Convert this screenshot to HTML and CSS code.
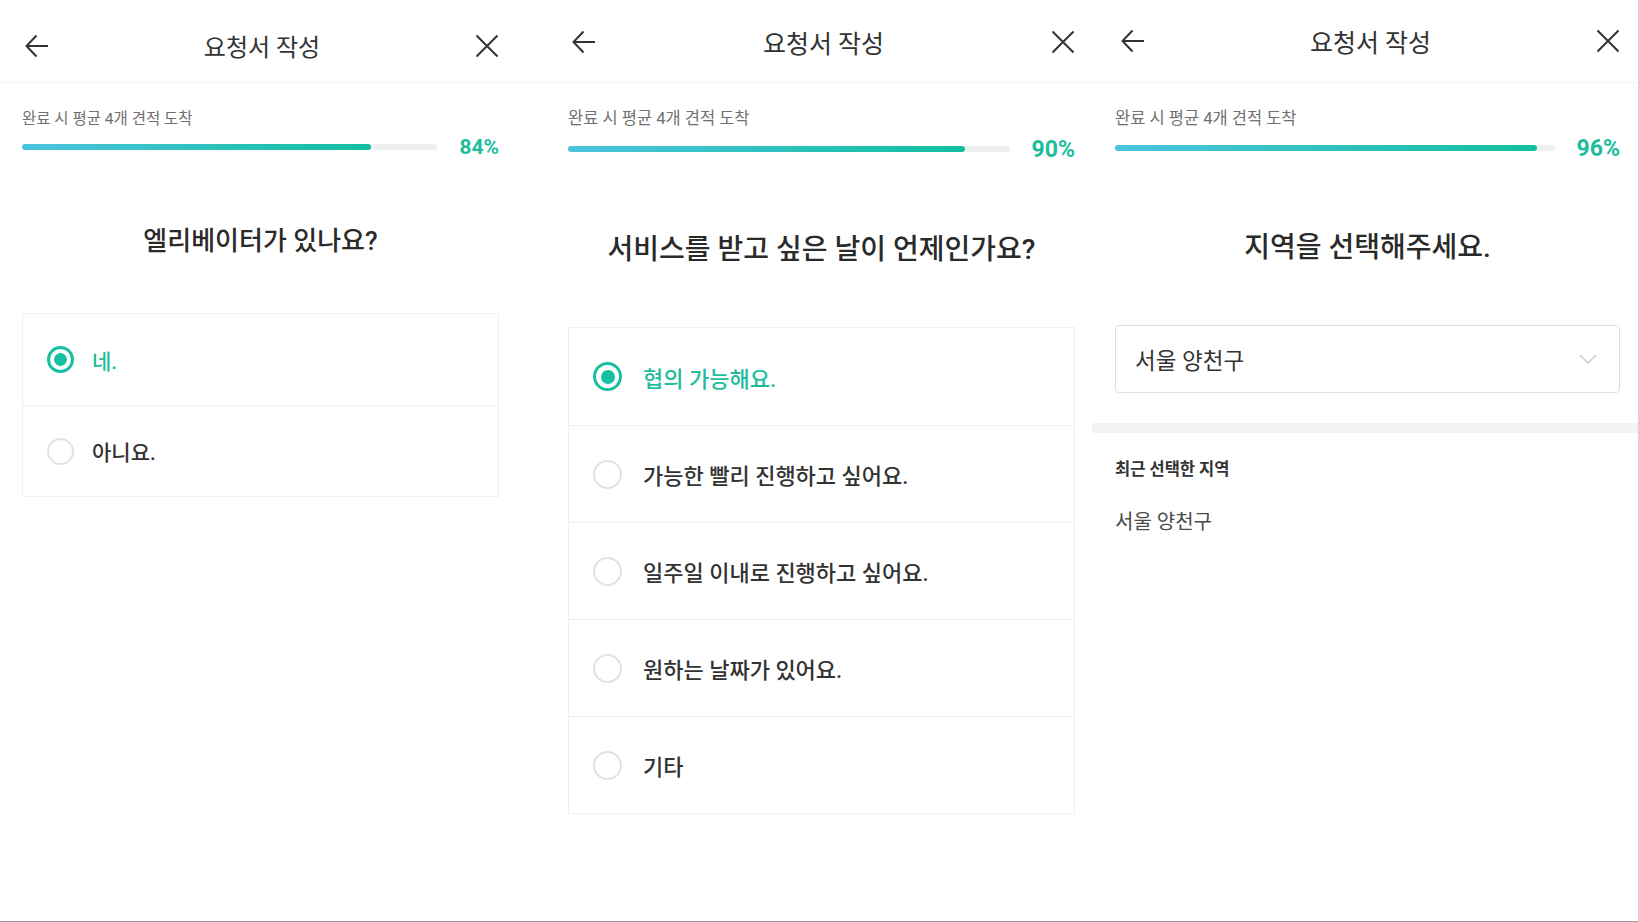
FILE: index.html
```html
<!DOCTYPE html>
<html lang="ko">

<head>
    <meta charset="UTF-8">
    <meta name="viewport" content="width=device-width, initial-scale=1.0">
    <title>요청서 작성</title>
    <link rel="stylesheet" href="styles.css">
</head>

<body>
    <div class="screens">

        <!-- step: elevator -->
        <div class="panel panel-1">
            <div class="header">
                <svg class="icon" viewBox="0 0 24 24"><path d="M23 12H2M11.5 1.5 1.5 12l10 10.5"/></svg>
                <span class="title">요청서 작성</span>
                <svg class="icon" viewBox="0 0 24 24"><path d="M1.5 1.5l21 21M22.5 1.5l-21 21"/></svg>
            </div>
            <div class="body">
                <p class="hint">완료 시 평균 4개 견적 도착</p>
                <div class="progress">
                    <div class="track"><div class="fill" style="width: 84%"></div></div>
                    <span class="percent">84%</span>
                </div>
                <h1 class="question">엘리베이터가 있나요?</h1>
                <div class="options">
                    <div class="option selected"><span class="radio"></span><span>네.</span></div>
                    <div class="option"><span class="radio"></span><span>아니요.</span></div>
                </div>
            </div>
        </div>

        <!-- step: date -->
        <div class="panel panel-2">
            <div class="header">
                <svg class="icon" viewBox="0 0 24 24"><path d="M23 12H2M11.5 1.5 1.5 12l10 10.5"/></svg>
                <span class="title">요청서 작성</span>
                <svg class="icon" viewBox="0 0 24 24"><path d="M1.5 1.5l21 21M22.5 1.5l-21 21"/></svg>
            </div>
            <div class="body">
                <p class="hint">완료 시 평균 4개 견적 도착</p>
                <div class="progress">
                    <div class="track"><div class="fill" style="width: 90%"></div></div>
                    <span class="percent">90%</span>
                </div>
                <h1 class="question">서비스를 받고 싶은 날이 언제인가요?</h1>
                <div class="options">
                    <div class="option selected"><span class="radio"></span><span>협의 가능해요.</span></div>
                    <div class="option"><span class="radio"></span><span>가능한 빨리 진행하고 싶어요.</span></div>
                    <div class="option"><span class="radio"></span><span>일주일 이내로 진행하고 싶어요.</span></div>
                    <div class="option"><span class="radio"></span><span>원하는 날짜가 있어요.</span></div>
                    <div class="option"><span class="radio"></span><span>기타</span></div>
                </div>
            </div>
        </div>

        <!-- step: region -->
        <div class="panel panel-3">
            <div class="header">
                <svg class="icon" viewBox="0 0 24 24"><path d="M23 12H2M11.5 1.5 1.5 12l10 10.5"/></svg>
                <span class="title">요청서 작성</span>
                <svg class="icon" viewBox="0 0 24 24"><path d="M1.5 1.5l21 21M22.5 1.5l-21 21"/></svg>
            </div>
            <div class="body">
                <p class="hint">완료 시 평균 4개 견적 도착</p>
                <div class="progress">
                    <div class="track"><div class="fill" style="width: 96%"></div></div>
                    <span class="percent">96%</span>
                </div>
                <h1 class="question">지역을 선택해주세요.</h1>
                <div class="select">
                    <span>서울 양천구</span>
                    <svg class="chevron" viewBox="0 0 18 10"><path d="M1 1l8 8 8-8"/></svg>
                </div>
                <div class="band"></div>
                <h2 class="recent-label">최근 선택한 지역</h2>
                <p class="recent">서울 양천구</p>
            </div>
        </div>

    </div>
</body>

</html>
```

FILE: styles.css
```css
* {
    box-sizing: border-box;
    font-family: Roboto, "Noto Sans CJK KR", sans-serif;
}

body {
    margin: 0;
    background-color: #ffffff;
    color: #333333;
}

.screens {
    display: flex;
    height: 922px;
    border-bottom: 1px solid #9a9a9a;
}

.panel {
    width: 546px;
    flex: none;
}

/* header */

.header {
    height: 83px;
    display: flex;
    align-items: center;
    justify-content: space-between;
    border-bottom: 1px solid #f4f4f4;
}

.icon {
    width: 24px;
    height: 24px;
    fill: none;
    stroke: #333333;
    stroke-width: 2;
}

.title {
    font-size: 25px;
    color: #333333;
}

/* progress */

.hint {
    margin: 26px 0 0;
    font-size: 16.5px;
    line-height: 20px;
    color: #707070;
}

.progress {
    display: flex;
    align-items: center;
    gap: 22px;
    height: 24px;
}

.track {
    flex: 1;
    height: 6px;
    border-radius: 3px;
    background-color: #f0f0f0;
}

.fill {
    height: 100%;
    border-radius: 3px;
    background: linear-gradient(to right, #4cc4df, #12bf9f);
}

.percent {
    font-size: 23px;
    font-weight: 700;
    color: #1dbd9e;
}

.question {
    margin: 69px 0 0;
    font-size: 28px;
    line-height: 38px;
    font-weight: 500;
    text-align: center;
    color: #2a2a2a;
}

/* options */

.options {
    border: 1px solid #efefef;
}

.option {
    display: flex;
    align-items: center;
    gap: 21px;
    height: 97px;
    padding-left: 24px;
    font-size: 22px;
    font-weight: 500;
    color: #333333;
}

.option + .option {
    border-top: 1px solid #efefef;
}

.radio {
    width: 29px;
    height: 29px;
    border: 2px solid #e2e2e2;
    border-radius: 50%;
    display: flex;
    align-items: center;
    justify-content: center;
}

.option.selected {
    color: #1dbd9e;
}

.option.selected .radio {
    border: 3px solid #16bf9f;
}

.option.selected .radio::after {
    content: "";
    width: 14px;
    height: 14px;
    border-radius: 50%;
    background-color: #16bf9f;
}

/* panel 1 is a slightly smaller screenshot */

.panel-1 .header {
    padding: 9px 47px 0 25px;
}

.panel-1 .title {
    font-size: 24px;
}

.panel-1 .body {
    padding: 0 47px 0 22px;
}

.panel-1 .hint {
    font-size: 15.5px;
}

.panel-1 .progress {
    margin-top: 6px;
}

.panel-1 .percent {
    font-size: 21px;
}

.panel-1 .question {
    margin-top: 64px;
    font-size: 26px;
    line-height: 36px;
}

.panel-1 .options {
    margin-top: 54px;
}

.panel-1 .option {
    height: 91px;
    gap: 18px;
    padding-left: 24px;
    font-size: 21px;
}

.panel-1 .radio {
    width: 27px;
    height: 27px;
}

.panel-1 .option.selected .radio::after {
    width: 13px;
    height: 13px;
}

.panel-2 .header {
    padding: 1px 17px 0 26px;
}

.panel-2 .body {
    padding: 0 17px 0 22px;
}

.panel-2 .progress {
    margin-top: 8px;
}

.panel-2 .question {
    margin-top: 70px;
}

.panel-2 .options {
    margin-top: 58px;
}

.panel-3 .header {
    padding: 0 18px 0 29px;
}

.panel-3 .body {
    padding: 0 18px 0 23px;
}

.panel-3 .progress {
    margin-top: 7px;
}

/* region select */

.select {
    margin-top: 58px;
    height: 68px;
    display: flex;
    align-items: center;
    justify-content: space-between;
    padding: 0 22px 0 19px;
    border: 1px solid #dddddd;
    border-radius: 4px;
    font-size: 22.5px;
    color: #333333;
}

.chevron {
    width: 18px;
    height: 10px;
    fill: none;
    stroke: #cccccc;
    stroke-width: 1.5;
}

.band {
    height: 10px;
    margin: 30px -18px 0 -23px;
    background-color: #f2f2f2;
}

.recent-label {
    margin: 27px 0 0;
    font-size: 16.5px;
    line-height: 20px;
    font-weight: 700;
    color: #333333;
}

.recent {
    margin: 30px 0 0;
    font-size: 20px;
    line-height: 24px;
    color: #4a4a4a;
}
```
